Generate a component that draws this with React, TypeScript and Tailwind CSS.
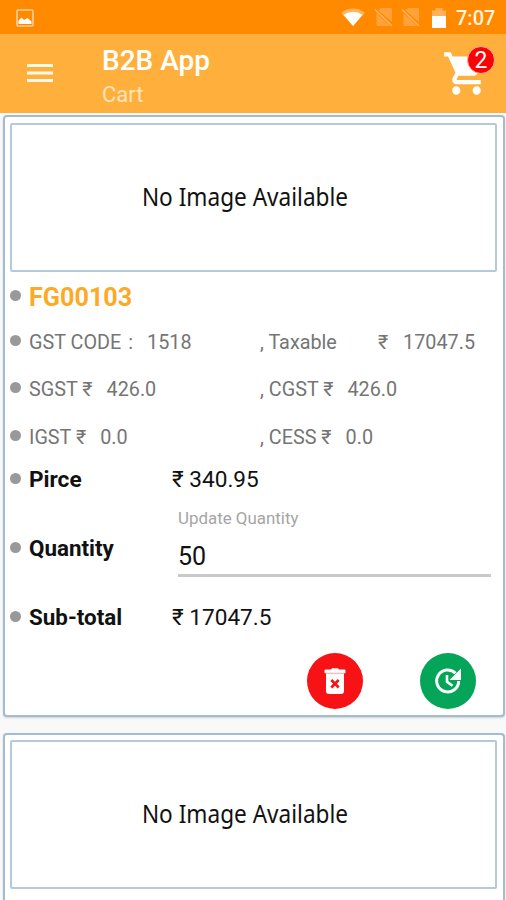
import type { ReactNode } from "react";

function StatusBar() {
  return (
    <div className="flex h-[34px] items-center bg-[#ff8a00] pl-[16px] pr-[10px]">
      <svg className="mt-[1px] h-[18px] w-[18px]" viewBox="0 0 18 18">
        <rect x="1" y="1" width="16" height="16" rx="1" fill="none" stroke="#ffcf9c" strokeWidth="1.6" />
        <path d="M2.500 15v-3.500l3-3 2.500 2.500 3.500-2 4 3.500v2.500z" fill="#fff" />
      </svg>
      <div className="flex-1" />
      <svg className="mt-[1px] h-[19px] w-[24px]" viewBox="0 0 24 20" preserveAspectRatio="none">
        <path d="M0 5Q12-4 24 5L12 19z" fill="#ffb45c" />
        <path d="M2.500 7Q12 1 21.500 7L12 19z" fill="#fff" />
      </svg>
      <NoSim className="ml-[9px]" />
      <NoSim className="ml-[7px]" />
      <svg className="ml-[11px] mt-[1px] h-[20px] w-[14px]" viewBox="0 0 14 20">
        <path d="M0 2.500h3.500V0h7v2.500H14V9H0z" fill="#ffb05a" />
        <path d="M0 8h14v12H0z" fill="#fff" />
      </svg>
      <span className="ml-[10px] mt-[1px] w-[40px] whitespace-nowrap text-[20px] font-medium leading-5 text-[#fff3e2]">7:07</span>
    </div>
  );
}

function NoSim({ className }: { className: string }) {
  return (
    <svg className={`h-[20px] w-[20px] ${className}`} viewBox="0 0 20 20">
      <path d="M7 1h9.500q1.500 0 1.500 1.500v12.500L4.500 3.500zM2.500 6L16 19H4q-1.500 0-1.500-1.500z" fill="#ffa23c" />
      <path d="M1 2.500L18 19" stroke="#ffb566" strokeWidth="1.500" />
    </svg>
  );
}

function AppBar() {
  return (
    <div className="flex h-[79px] bg-[#ffb03c] text-white">
      <svg className="ml-[27px] mt-[29px] h-[20px] w-[26px]" viewBox="0 0 26 20">
        <path d="M0 2.500h26M0 10h26M0 17.500h26" stroke="#fff9ea" strokeWidth="3" />
      </svg>
      <div className="ml-[49px] pt-[11px]">
        <div className="text-[28px] font-medium leading-8">B2B App</div>
        <div className="mt-[5px] text-[22px] leading-[26px] text-[#ffe3ba]">Cart</div>
      </div>
      <div className="relative ml-auto mr-[11px] mt-[12px] h-[54px] w-[53px]">
        <svg className="absolute left-0 top-[2px] h-[51px] w-[49px]" viewBox="0 0 24 24" fill="#fff" preserveAspectRatio="none">
          <path d="M7 18c-1.100 0-1.990.9-1.990 2S5.900 22 7 22s2-.9 2-2-.9-2-2-2zM1 2v2h2l3.600 7.590-1.350 2.450c-.16.280-.25.610-.25.960 0 1.100.9 2 2 2h12v-2H7.420c-.14 0-.25-.11-.25-.25l.03-.12.900-1.630h7.450c.750 0 1.410-.410 1.750-1.030l3.580-6.490c.080-.14.120-.31.120-.48 0-.55-.45-1-1-1H5.210l-.94-2H1zm16 16c-1.100 0-1.990.9-1.990 2s.89 2 1.990 2 2-.9 2-2-.9-2-2-2z" />
        </svg>
        <div className="absolute right-0 top-0 flex h-[28px] w-[28px] items-center justify-center rounded-full border border-[#ffb090] bg-[#fb0205] text-[23px] leading-none">
          2
        </div>
      </div>
    </div>
  );
}

function NoImage() {
  return (
    <div className="flex h-[149px] items-center justify-center rounded-[2px] border-2 border-[#b4c9dc] bg-white">
      <span className="-mt-[4px] ml-[-17px] inline-block origin-center scale-x-[0.904] whitespace-nowrap font-['Noto_Sans',sans-serif] text-[25px] leading-8 text-[#111]">
        No Image Available
      </span>
    </div>
  );
}

function Row({ className, children }: { className: string; children: ReactNode }) {
  return (
    <div className={`flex items-center ${className}`}>
      <span className="-mt-px mr-[8px] h-[11px] w-[11px] shrink-0 rounded-full bg-[#999]" />
      {children}
    </div>
  );
}

function TaxRow({ className, left, right }: { className: string; left: ReactNode; right: ReactNode }) {
  return (
    <Row className={`text-[19.8px] text-[#757575] ${className}`}>
      <span className="mt-[3px] w-[231px] whitespace-pre">{left}</span>
      <span className="mt-[3px] whitespace-pre">{right}</span>
    </Row>
  );
}

function Card({ className, children }: { className: string; children: ReactNode }) {
  return (
    <div className={`ml-[3px] mr-[1px] rounded-[4px] border-2 border-[#a5bccd] bg-white pl-[5px] pr-[6px] shadow-[0_1px_2px_#cbd3da] ${className}`}>
      {children}
    </div>
  );
}

function CartItem() {
  return (
    <Card className="h-[602px] pt-[6px]">
      <NoImage />
      <Row className="h-[48px]">
        <span className="mt-[4px] text-[25.2px] font-bold text-[#fcaa26]">FG00103</span>
      </Row>
      <TaxRow
        className="h-[42px]"
        left={<>GST CODE<span className="ml-[7px]">:</span><span className="ml-[14px]">1518</span></>}
        right={<>, Taxable<span className="ml-[41px]">₹</span><span className="ml-[15px]">17047.5</span></>}
      />
      <TaxRow
        className="h-[52px]"
        left={<>SGST ₹<span className="ml-[14px]">426.0</span></>}
        right={<>, CGST ₹<span className="ml-[14px]">426.0</span></>}
      />
      <TaxRow
        className="h-[44px]"
        left={<>IGST ₹<span className="ml-[14px]">0.0</span></>}
        right={<>, CESS ₹<span className="ml-[14px]">0.0</span></>}
      />
      <Row className="h-[42px] text-[22.6px] text-[#111]">
        <span className="mt-[1px] w-[143px] font-bold">Pirce</span>
        <span className="mt-[1px]">₹ 340.95</span>
      </Row>
      <Row className="h-[96px] text-[22.6px] text-[#111]">
        <span className="mt-[1px] w-[149px] text-[22.4px] font-bold">Quantity</span>
        <div className="mr-[6px] flex h-full flex-1 flex-col">
          <span className="mt-[6px] text-[16.9px] leading-6 text-[#a5a5a5]">Update Quantity</span>
          <div className="mt-[4px] flex h-[43px] items-center border-b-[3px] border-[#c9c9c9] text-[25px]">
            <span className="mt-[6px]">50</span>
          </div>
        </div>
      </Row>
      <Row className="h-[42px] text-[22.6px] text-[#111]">
        <span className="mt-[2px] w-[143px] text-[22.4px] font-bold">Sub-total</span>
        <span className="mt-[2px]">₹ 17047.5</span>
      </Row>
      <div className="flex justify-end gap-[57px] pr-[21px] pt-[15px]">
        <button className="flex h-14 w-14 items-center justify-center rounded-full bg-[#f61215]">
          <svg className="h-7 w-7" viewBox="0 0 28 28">
            <path d="M3.500 3.500q0-1 1-1H10l1-1.200h6l1 1.200h5.500q1 0 1 1V6h-21zM5 6h18v18q0 3-3 3H8q-3 0-3-3z" fill="#fff" />
            <path d="M4 6.300h20" stroke="#fa8a8b" strokeWidth="0.800" />
            <path d="M10.300 13l7.400 7.500M17.700 13l-7.400 7.500" stroke="#f61215" strokeWidth="2.600" />
          </svg>
        </button>
        <button className="flex h-14 w-14 items-center justify-center rounded-full bg-[#04a558]">
          <svg className="h-7 w-7" viewBox="0 0 28 28" fill="none">
            <path d="M21.500 6.200A11 11 0 1 0 24.700 14" stroke="#fff" strokeWidth="3" />
            <path d="M27 1.500V13H15.500L20 8.500z" fill="#fff" />
            <path d="M13 8v6.800l5.500 4" stroke="#fff" strokeWidth="2.600" />
          </svg>
        </button>
      </div>
    </Card>
  );
}

export default function App() {
  return (
    <div className="flex h-[900px] w-[506px] flex-col overflow-hidden bg-[#f9f9fa] font-[Roboto,'Noto_Sans',sans-serif]">
      <StatusBar />
      <AppBar />
      <div className="flex flex-1 flex-col gap-[16px] pt-[2px]">
        <CartItem />
        <Card className="flex-1 rounded-b-none border-b-0 pt-[5px]">
          <NoImage />
        </Card>
      </div>
    </div>
  );
}
